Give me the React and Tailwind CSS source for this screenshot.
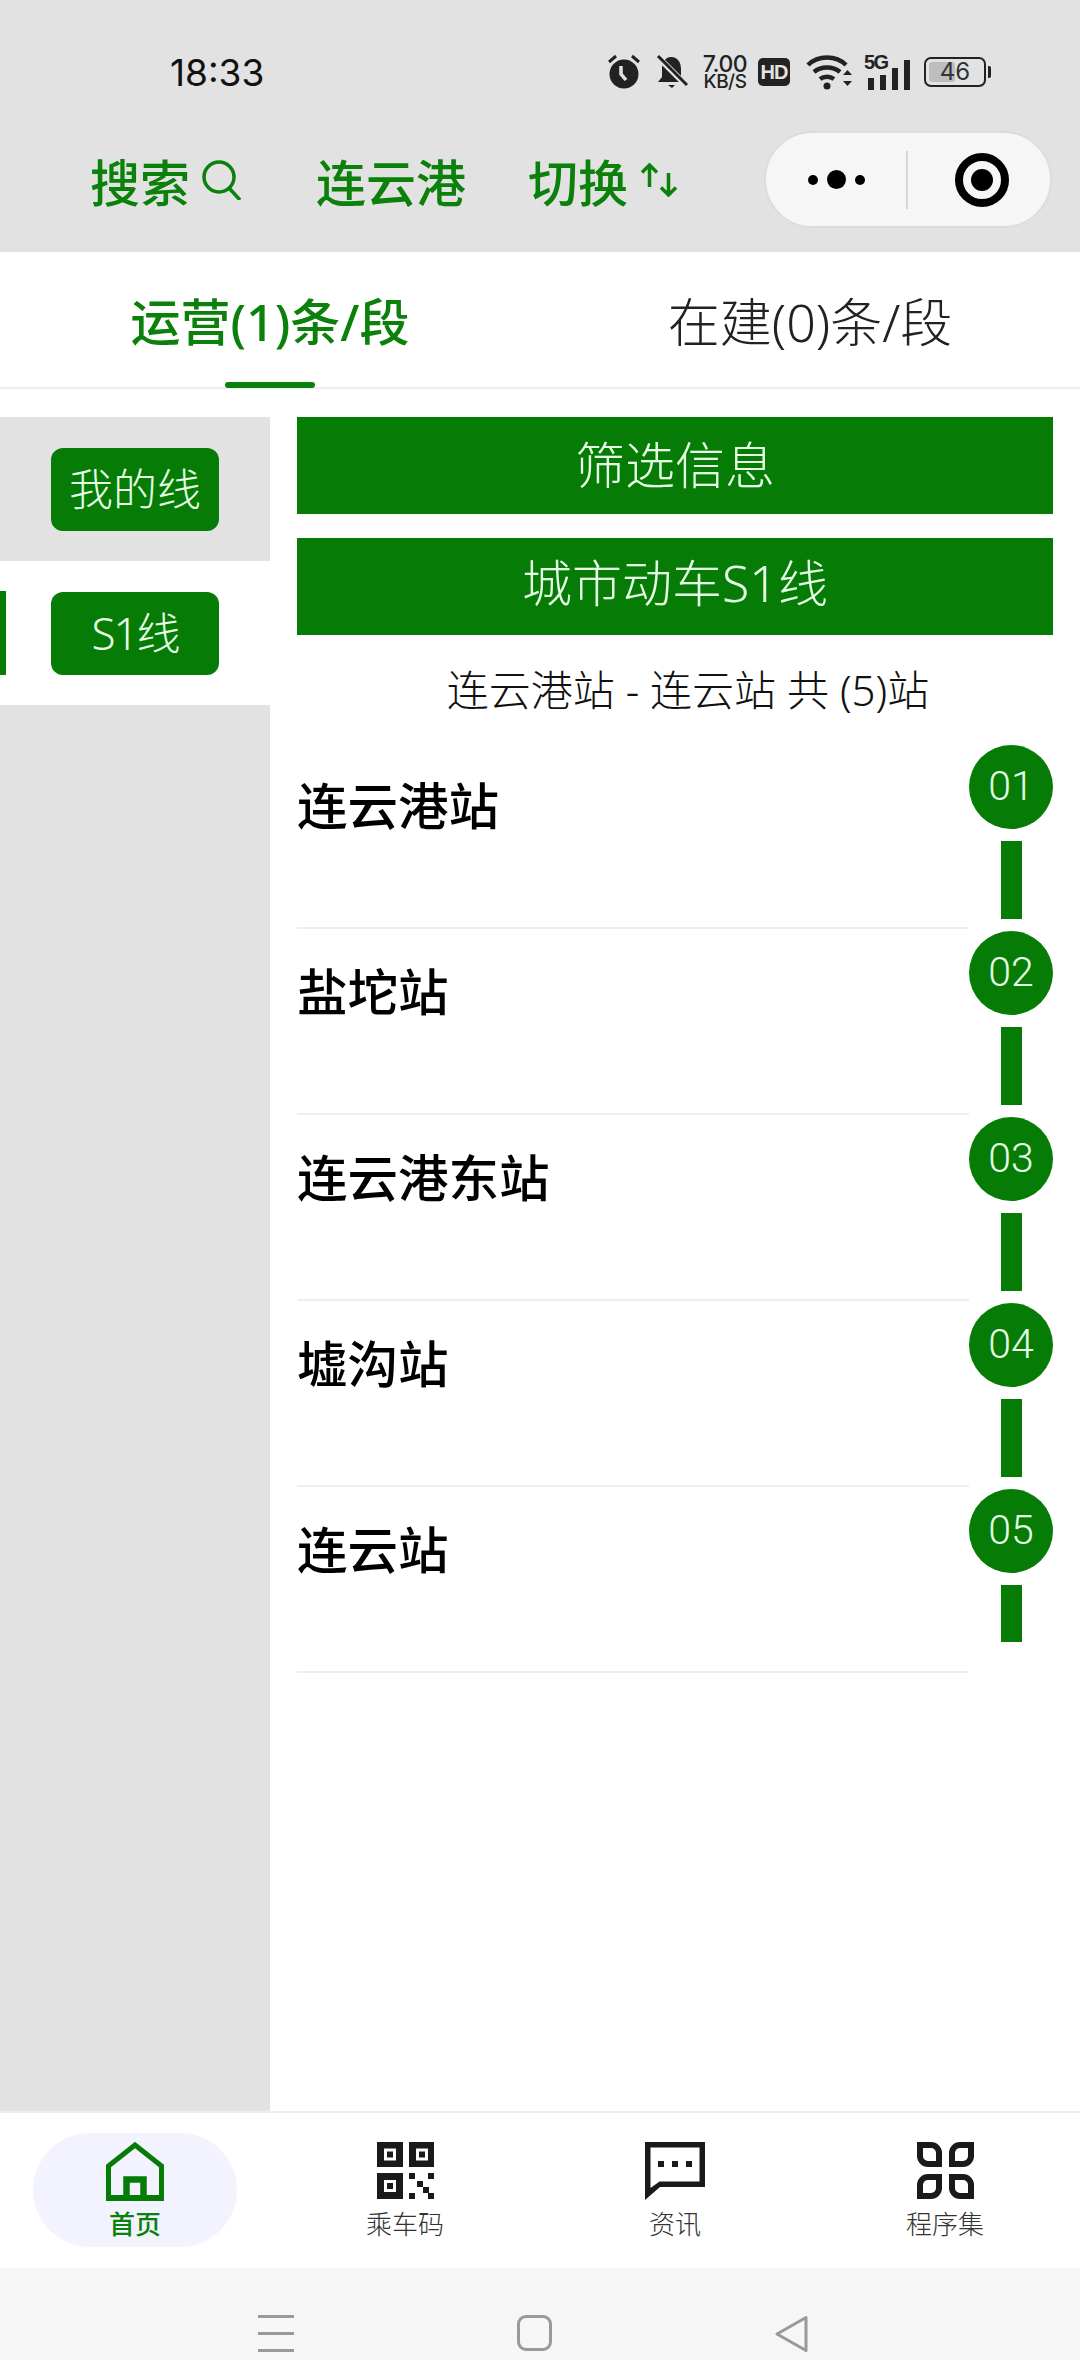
import React from 'react';

const stations = [
  { no: '01', name: '连云港站' },
  { no: '02', name: '盐坨站' },
  { no: '03', name: '连云港东站' },
  { no: '04', name: '墟沟站' },
  { no: '05', name: '连云站', last: true },
];

const StatusIcons = () => (
  <div className="flex items-center text-[#222]">
    <svg width="34" height="36" viewBox="0 0 34 36" className="mr-[15px]">
      <circle cx="17" cy="20" r="14.5" fill="#222" />
      <path d="M14 12v8l5 6" fill="none" stroke="#e2e2e2" strokeWidth="3.500" />
      <path d="M2 8l7-6M32 8l-7-6" fill="none" stroke="#222" strokeWidth="3" />
    </svg>
    <svg width="32" height="36" viewBox="0 0 32 36" className="mr-[12px]">
      <path d="M15 3c7 0 10 6 10 12v7l4 6H2l4-5v-9c0-5 3-11 9-11z" fill="#222" />
      <path d="M12 31h7l-3 3z" fill="#222" />
      <path d="M2 3l29 29" stroke="#e2e2e2" strokeWidth="6" />
      <path d="M2 2l29 29" stroke="#222" strokeWidth="3" />
    </svg>
    <div className="w-[50px] mr-[8px] flex flex-col items-center font-['Inter','Liberation_Sans',sans-serif] font-medium">
      <span className="text-[23px] leading-[19px] tracking-[-0.5px]">7.00</span>
      <span className="text-[19px] leading-[15px] tracking-[-0.5px]">KB/S</span>
    </div>
    <div className="w-[32px] h-[28px] mr-[16px] rounded-[5px] bg-[#222] text-[#e2e2e2] flex items-center justify-center text-[20px] font-bold font-['Liberation_Sans',sans-serif] tracking-[-1px]">HD</div>
    <svg width="46" height="36" viewBox="0 0 46 36" className="mr-[12px]">
      <path d="M2 11c10-10 28-10 38 0M8 18c7-6 19-6 26 0M14 25c4-3 10-3 14 0" fill="none" stroke="#222" strokeWidth="4.500" />
      <circle cx="21" cy="32" r="3.500" fill="#222" />
      <path d="M37 21l4.500-5 4.500 5zM37 27h9l-4.500 5z" fill="#222" />
    </svg>
    <div className="relative w-[46px] h-[36px] mr-[14px]">
      <span className="absolute left-0 top-[-1px] text-[20px] leading-[18px] font-bold font-['Liberation_Sans',sans-serif] tracking-[-1.5px]">5G</span>
      <div className="absolute bottom-0 right-0 flex items-end gap-[6px]">
        <div className="w-[6px] h-[12px] bg-[#222]" />
        <div className="w-[6px] h-[15px] bg-[#222]" />
        <div className="w-[6px] h-[22px] bg-[#222]" />
        <div className="w-[6px] h-[30px] bg-[#222]" />
      </div>
    </div>
    <div className="flex items-center">
      <div className="w-[62px] h-[30px] rounded-[7px] border-[2px] border-[#222] p-[3px] relative flex items-center">
        <div className="w-[26px] h-full rounded-[3px] bg-[#bdbdbd]" />
        <span className="absolute inset-0 flex items-center justify-center text-[24px] font-['Inter',sans-serif] text-[#333]">46</span>
      </div>
      <div className="w-[3px] h-[12px] ml-[2px] bg-[#222] rounded-r-[2px]" />
    </div>
  </div>
);

const Header = () => (
  <header className="h-[252px] bg-[#e2e2e2] flex flex-col">
    <div className="h-[131px] pl-[170px] pr-[89px] pt-[13px] flex items-center justify-between">
      <span className="text-[37px] leading-none text-[#111] font-['Inter',sans-serif]">18:33</span>
      <StatusIcons />
    </div>
    <div className="flex items-center pl-[90px] pr-[28px] text-[#0b800b] text-[50px] leading-none font-medium">
      <div className="flex items-center w-[226px]">
        搜索
        <svg width="40" height="40" viewBox="0 0 40 40" fill="none" stroke="#0b800b" strokeWidth="3.500" className="ml-[12px]">
          <circle cx="17" cy="17" r="15" />
          <path d="M27 28l11 12" />
        </svg>
      </div>
      <span className="w-[212px]">连云港</span>
      <div className="flex items-center">
        切换
        <svg width="38" height="34" viewBox="0 0 38 34" className="ml-[12px]" fill="none" stroke="#0b800b" strokeWidth="3.500">
          <path d="M9.500 24V2M2 9.500l7.500-7.500 7.500 7.500" />
          <path d="M28.500 10v22M21 24.500l7.500 7.500 7.500-7.500" />
        </svg>
      </div>
      <div className="ml-auto w-[288px] h-[97px] rounded-full bg-[#f6f6f6] border-[2px] border-[#dcdcdc] flex items-center">
        <div className="flex-1 flex items-center justify-center gap-[9px]">
          <div className="w-[10px] h-[10px] rounded-full bg-black" />
          <div className="w-[19px] h-[19px] rounded-full bg-black" />
          <div className="w-[10px] h-[10px] rounded-full bg-black" />
        </div>
        <div className="w-[2px] h-[58px] bg-[#d8d8d8]" />
        <div className="w-[142px] pl-[6px] flex items-center justify-center">
          <div className="w-[54px] h-[54px] rounded-full border-[8px] border-black flex items-center justify-center">
            <div className="w-[22px] h-[22px] rounded-full bg-black" />
          </div>
        </div>
      </div>
    </div>
  </header>
);

const Tabs = () => (
  <div className="h-[137px] border-b-[2px] border-[#eeeeee] flex font-['Noto_Sans','Noto_Sans_CJK_SC',sans-serif]">
    <div className="w-[540px] flex flex-col items-center">
      <span className="pt-[41px] text-[50px] leading-[58px] font-medium text-[#0b800b]">运营(1)条/段</span>
      <div className="mt-auto w-[90px] h-[6px] rounded-full bg-[#0b800b] -mb-[1px]" />
    </div>
    <div className="w-[540px] flex justify-center">
      <span className="pt-[41px] text-[52px] leading-[58px] font-light text-[#222]">在建(0)条/段</span>
    </div>
  </div>
);

const Sidebar = () => (
  <aside className="w-[270px] mt-[28px] bg-[#e2e2e2] text-[44px] font-light text-[#e6ffe6] font-['Noto_Sans','Noto_Sans_CJK_SC',sans-serif]">
    <div className="h-[144px] flex items-center justify-center">
      <div className="w-[168px] h-[83px] rounded-[12px] bg-[#067c06] flex items-center justify-center">我的线</div>
    </div>
    <div className="h-[144px] bg-white flex items-center justify-center relative">
      <div className="absolute left-0 top-[30px] w-[6px] h-[84px] bg-[#067c06]" />
      <div className="w-[168px] h-[83px] rounded-[12px] bg-[#067c06] flex items-center justify-center tracking-[-2px]">S1线</div>
    </div>
  </aside>
);

const StationRow = ({ no, name, last }) => (
  <div className="h-[186px] flex">
    <div className="flex-1 border-b-[2px] border-[#eeeeee] pt-[30px] text-[50.5px] leading-[60px] font-medium text-black">{name}</div>
    <div className="w-[84px] pt-[2px] flex flex-col items-center">
      <div className="w-[84px] h-[84px] rounded-full bg-[#067c06] text-[#e6ffe6] text-[41px] font-light font-['Roboto',sans-serif] flex items-center justify-center">{no}</div>
      <div className={last ? 'mt-[12px] w-[21px] h-[57px] bg-[#067c06]' : 'mt-[12px] w-[21px] h-[78px] bg-[#067c06]'} />
    </div>
  </div>
);

const StationList = () => (
  <section className="flex-1 pt-[28px] pl-[27px] pr-[27px]">
    <div className="h-[97px] pb-[7px] bg-[#067c06] text-[#e6ffe6] text-[50px] font-light flex items-center justify-center">筛选信息</div>
    <div className="h-[97px] pb-[7px] mt-[24px] bg-[#067c06] text-[#e6ffe6] text-[50px] font-light flex items-center justify-center font-['Noto_Sans','Noto_Sans_CJK_SC',sans-serif]">城市动车S1线</div>
    <div className="h-[108px] pl-[26px] flex items-center justify-center text-[42px] font-light text-[#111] whitespace-nowrap font-['Noto_Sans','Noto_Sans_CJK_SC',sans-serif]">连云港站 - 连云站 共 (5)站</div>
    {stations.map((s) => <StationRow key={s.no} {...s} />)}
  </section>
);

const HomeIcon = () => (
  <svg width="58" height="59" viewBox="0 0 58 59" fill="none">
    <path d="M2.500 56.500V24L29 3l26.500 21v32.500z" stroke="#067c06" strokeWidth="5" />
    <path d="M0 53h58v6H0z" fill="#067c06" />
    <path d="M20.500 56V37.500h17V56" stroke="#067c06" strokeWidth="6.500" />
  </svg>
);

const QrIcon = () => (
  <svg width="57" height="57" viewBox="0 0 57 57" fill="#1a1a1a">
    <path fillRule="evenodd" d="M0 0h26v25H0zM7 6.500v12h12v-12zM10 9.500h6v6h-6zM32 0h25v25H32zM39 6.500v12h12v-12zM42 9.500h6v6h-6zM0 31h26v26H0zM7 38v12h12V38zM10 41h6v6h-6z" />
    <path d="M32 31h6v6h-6zM51 31h6v6h-6zM40 39h6v6h-6zM46 45h6v6h-6zM32 51h6v6h-6zM51 51h6v6h-6z" />
  </svg>
);

const ChatIcon = () => (
  <svg width="60" height="58" viewBox="0 0 60 58" fill="#1a1a1a">
    <path fillRule="evenodd" d="M0 0h60v45H15L0 58zM5.500 5.500V46l9-6.500h40v-34z" />
    <path d="M13 19h6v6h-6zM27 19h6v6h-6zM41 19h6v6h-6z" />
  </svg>
);

const AppsIcon = () => (
  <svg width="57" height="57" viewBox="0 0 57 57" fill="none" stroke="#1a1a1a" strokeWidth="6">
    <path d="M3 3h11a8 8 0 0 1 8 8v11H11a8 8 0 0 1-8-8z" />
    <path d="M54 3H43a8 8 0 0 0-8 8v11h11a8 8 0 0 0 8-8z" />
    <path d="M3 54h11a8 8 0 0 0 8-8V35H11a8 8 0 0 0-8 8z" />
    <path d="M54 54H43a8 8 0 0 1-8-8V35h11a8 8 0 0 1 8 8z" />
  </svg>
);

const TabBar = () => (
  <nav className="h-[157px] border-t-[2px] border-[#eeeeee] bg-white grid grid-cols-4 items-start">
    <div className="relative flex flex-col items-center pt-[29px]">
      <div className="absolute left-[33px] top-[20px] w-[204px] h-[114px] rounded-full bg-[#f2f3fe]" />
      <div className="relative h-[63px]"><HomeIcon /></div>
      <span className="relative text-[26px] leading-[36px] font-medium text-[#0b800b]">首页</span>
    </div>
    <div className="flex flex-col items-center pt-[29px]">
      <div className="h-[63px]"><QrIcon /></div>
      <span className="text-[26px] leading-[36px] font-light text-[#333]">乘车码</span>
    </div>
    <div className="flex flex-col items-center pt-[29px]">
      <div className="h-[63px]"><ChatIcon /></div>
      <span className="text-[26px] leading-[36px] font-light text-[#333]">资讯</span>
    </div>
    <div className="flex flex-col items-center pt-[29px]">
      <div className="h-[63px]"><AppsIcon /></div>
      <span className="text-[26px] leading-[36px] font-light text-[#333]">程序集</span>
    </div>
  </nav>
);

const SystemBar = () => (
  <div className="h-[92px] bg-[#f6f6f6] flex items-start pt-[47px] pl-[258px]">
    <div className="w-[36px] h-[37px] flex flex-col justify-between">
      <div className="h-[3px] bg-[#999]" />
      <div className="h-[3px] bg-[#999]" />
      <div className="h-[3px] bg-[#999]" />
    </div>
    <div className="ml-[223px] w-[35px] h-[36px] rounded-[9px] border-[3px] border-[#999]" />
    <svg width="36" height="38" viewBox="0 0 36 38" fill="none" className="ml-[222px]">
      <path d="M32 2.500v33L3 19z" stroke="#999" strokeWidth="3" strokeLinejoin="round" />
    </svg>
  </div>
);

const App = () => {
  return (
    <div className="w-[1080px] h-[2360px] bg-white flex flex-col overflow-hidden font-['Noto_Sans_CJK_SC','Noto_Sans',sans-serif]">
      <Header />
      <Tabs />
      <main className="flex-1 flex">
        <Sidebar />
        <StationList />
      </main>
      <TabBar />
      <SystemBar />
    </div>
  );
};

export default App;
